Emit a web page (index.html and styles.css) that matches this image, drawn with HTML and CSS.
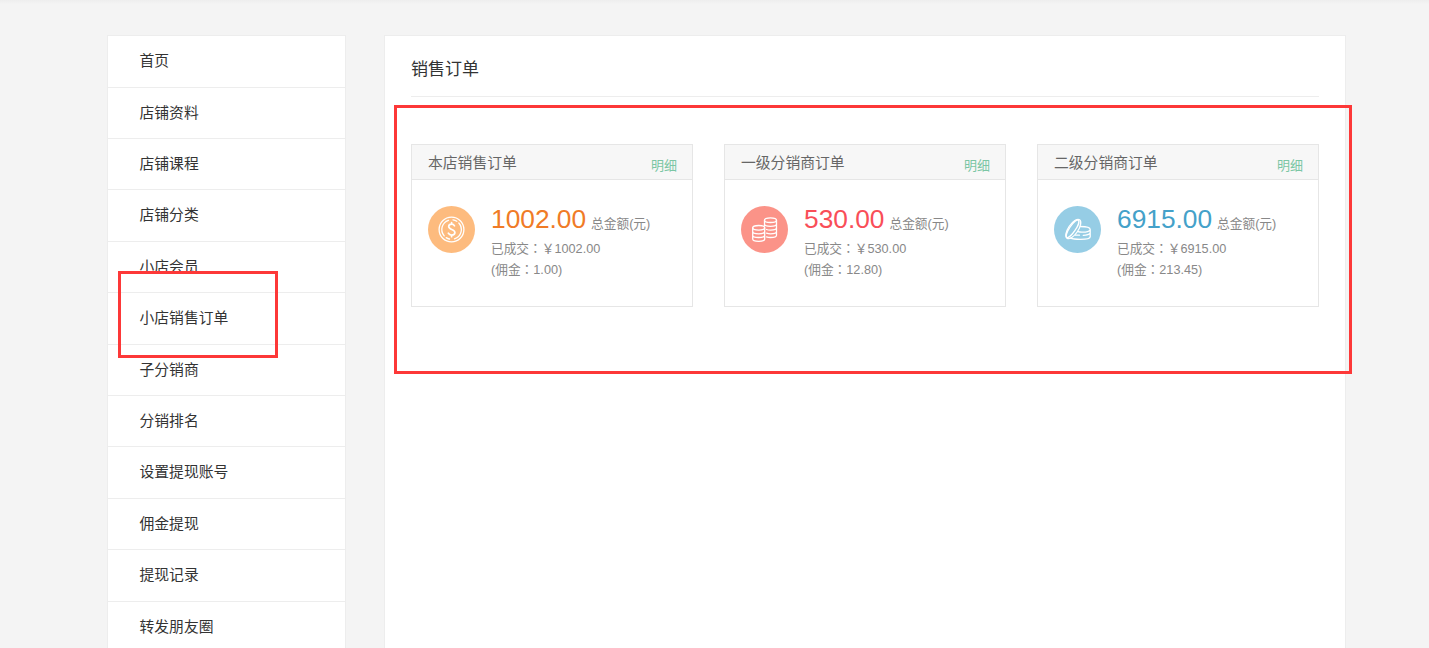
FILE: index.html
```html
<!DOCTYPE html>
<html lang="zh-CN">
<head>
    <meta charset="UTF-8">
    <title>销售订单</title>
    <link rel="stylesheet" href="styles.css">
</head>
<body>

<div class="container">
    <ul class="sidebar">
        <li><a>首页</a></li>
        <li><a>店铺资料</a></li>
        <li><a>店铺课程</a></li>
        <li><a>店铺分类</a></li>
        <li><a>小店会员</a></li>
        <li class="current"><a>小店销售订单</a></li>
        <li><a>子分销商</a></li>
        <li><a>分销排名</a></li>
        <li><a>设置提现账号</a></li>
        <li><a>佣金提现</a></li>
        <li><a>提现记录</a></li>
        <li><a>转发朋友圈</a></li>
    </ul>

    <div class="main-content">
        <h2>销售订单</h2>
        <div class="cards">
            <div class="card orange">
                <div class="card-head"><h3>本店销售订单</h3><a>明细</a></div>
                <div class="card-body">
                    <svg class="icon" viewBox="0 0 47 47">
                        <circle class="disc" cx="23.5" cy="23.5" r="23.5"/>
                        <circle cx="23.5" cy="23.5" r="12.4"/>
                        <path d="M20.500 14.300a9.700 9.700 0 0 0-4.300 15.600M18.200 31.600a9.700 9.700 0 0 0 3.300 1.400M25 13.900a9.700 9.700 0 0 1 3.800 1.400M30.800 17a9.700 9.700 0 0 1-4.300 15.800"/>
                        <path class="bold" d="M26.500 19.800c-.6-1.100-1.600-1.700-2.900-1.700-1.800 0-2.900 1-2.900 2.500 0 3.500 6.200 2.200 6.200 5.900 0 1.600-1.300 2.600-3.200 2.600-1.500 0-2.800-.7-3.400-1.900M23.600 16.500v1.600M23.600 29.100v1.600"/>
                    </svg>
                    <div class="info">
                        <p class="total"><b>1002.00</b> 总金额(元)</p>
                        <p>已成交<i lang="zh-TW">：</i>￥1002.00</p>
                        <p>(佣金<i lang="zh-TW">：</i>1.00)</p>
                    </div>
                </div>
            </div>
            <div class="card red">
                <div class="card-head"><h3>一级分销商订单</h3><a>明细</a></div>
                <div class="card-body">
                    <svg class="icon" viewBox="0 0 47 47">
                        <circle class="disc" cx="23.5" cy="23.5" r="23.5"/>
                        <ellipse cx="17.700" cy="21.800" rx="6" ry="2.300"/>
                        <path d="M11.700 21.800v11.200c0 1.300 2.700 2.300 6 2.300s6-1 6-2.300v-11.200M11.700 25.500c0 1.300 2.700 2.300 6 2.300s6-1 6-2.300M11.700 29.200c0 1.300 2.700 2.300 6 2.300s6-1 6-2.300"/>
                        <ellipse cx="29.500" cy="14.200" rx="6" ry="2.300"/>
                        <path d="M23.500 19.500v-5.300M35.500 14.200v15c0 1.300-2.700 2.300-6 2.300-1.500 0-2.900-.2-4-.6M23.500 18c0 1.300 2.700 2.300 6 2.300s6-1 6-2.300M25.500 23.500c1.100.4 2.500.6 4 .6 3.300 0 6-1 6-2.300M25.500 27.200c1.100.4 2.500.6 4 .6 3.300 0 6-1 6-2.300"/>
                    </svg>
                    <div class="info">
                        <p class="total"><b>530.00</b> 总金额(元)</p>
                        <p>已成交<i lang="zh-TW">：</i>￥530.00</p>
                        <p>(佣金<i lang="zh-TW">：</i>12.80)</p>
                    </div>
                </div>
            </div>
            <div class="card blue">
                <div class="card-head"><h3>二级分销商订单</h3><a>明细</a></div>
                <div class="card-body">
                    <svg class="icon" viewBox="0 0 47 47">
                        <circle class="disc" cx="23.5" cy="23.5" r="23.5"/>
                        <ellipse cx="19.300" cy="23" rx="4.900" ry="11.200" transform="rotate(34 19.300 23)"/>
                        <ellipse cx="18.500" cy="22.800" rx="3" ry="10.400" transform="rotate(34 18.500 22.800)"/>
                        <path d="M26.500 20.500c5 0 9.700 1 9.700 3s-4.200 2.800-8.200 2.700c-1.700 0-3-.2-4-.5M36.200 23.500v7.300c0 1.600-4 2.600-9.700 2.600-4.500 0-8-.3-10-1.200M36.200 27.200c-1 1.600-4 2.100-7 2.100M25.500 29.200h-4"/>
                    </svg>
                    <div class="info">
                        <p class="total"><b>6915.00</b> 总金额(元)</p>
                        <p>已成交<i lang="zh-TW">：</i>￥6915.00</p>
                        <p>(佣金<i lang="zh-TW">：</i>213.45)</p>
                    </div>
                </div>
            </div>
        </div>
    </div>
</div>

</body>
</html>
```
FILE: styles.css
```css
* {
    box-sizing: border-box;
}
body {
    font-family: "Liberation Sans", "Noto Sans CJK SC", sans-serif;
    margin: 0;
    color: #333;
    background: #f4f4f4 linear-gradient(#eeeeee, #f4f4f4) no-repeat 0 0 / 100% 4px;
}
h2, h3, p, ul {
    margin: 0;
    padding: 0;
    font-weight: normal;
}
.container {
    display: flex;
    gap: 38px;
    width: 1239px;
    height: 648px;
    margin-left: 107px;
    padding-top: 35px;
}
.sidebar {
    width: 239px;
    overflow: hidden;
    list-style: none;
    background: white;
    border: 1px solid #ededed;
    border-bottom: none;
}
.sidebar li {
    position: relative;
    height: 51.4px;
    padding-left: 31.5px;
    border-bottom: 1px solid #ededed;
    font-size: 14.8px;
    line-height: 51.8px;
}
.sidebar li:first-child {
    height: 51.65px;
}
.sidebar li:last-child {
    height: 46px;
    border-bottom: none;
}
/* red frame round the selected entry */
.current::after {
    content: "";
    box-sizing: border-box;
    position: absolute;
    left: 10px;
    top: -22px;
    z-index: 1;
    width: 160px;
    height: 87px;
    border: 3px solid #fd3838;
}
.main-content {
    width: 962px;
    padding: 0 26px;
    background: white;
    border: 1px solid #ededed;
    border-bottom: none;
}
.main-content h2 {
    height: 61px;
    border-bottom: 1px solid #ededed;
    font-size: 17px;
    line-height: 67px;
}
.cards {
    display: flex;
    gap: 31px;
    height: 269px;
    margin: 8px -33px 0 -17px;
    padding: 36px 30px 0 14px;
    border: 3px solid #fd3838;
}
.card {
    width: 282px;
    height: 163px;
    border: 1px solid #e6e6e6;
}
.card-head {
    display: flex;
    justify-content: space-between;
    height: 35px;
    padding: 0 15px 0 16px;
    background: #f7f7f7;
    border-bottom: 1px solid #e6e6e6;
}
.card-head h3 {
    color: #666;
    font-size: 14.8px;
    line-height: 36px;
}
.card-head a {
    color: #7bc6a4;
    font-size: 13px;
    line-height: 42px;
}
.card-body {
    display: flex;
    gap: 16px;
    padding: 26px 0 0 16px;
}
.icon {
    width: 47px;
    height: 47px;
    fill: none;
    stroke: white;
    stroke-width: 1.3;
    stroke-linecap: round;
}
.icon .disc {
    stroke: none;
}
.icon .bold {
    stroke-width: 1.7;
}
.orange .disc { fill: #fdbb7e; }
.red .disc { fill: #fb9388; }
.blue .disc { fill: #96cde5; }
.orange b { color: #f07b26; }
.red b { color: #f94e58; }
.blue b { color: #44a1c9; }
.info {
    color: #888;
    font-size: 12.7px;
}
.info p {
    line-height: 21px;
    white-space: nowrap;
}
.info .total {
    height: 32.5px;
    line-height: 27px;
    word-spacing: 1.5px;
}
.info b {
    font-size: 26.3px;
    font-weight: normal;
}
/* centred full-width colon */
.info i {
    font-family: "Noto Sans CJK TC", sans-serif;
    font-style: normal;
    line-height: 0;
}
```
